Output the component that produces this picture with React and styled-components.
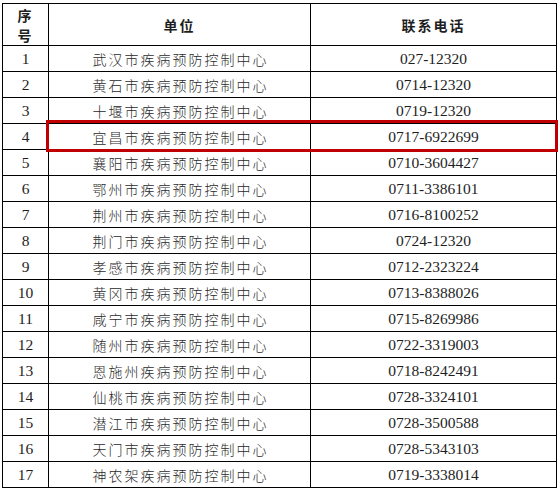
import React from "react";
import styled, { createGlobalStyle } from "styled-components";

const GlobalStyle = createGlobalStyle`
    html, body {
        margin: 0;
        padding: 0;
        background: #ffffff;
    }
`;

const rows = [
    ["武汉市疾病预防控制中心", "027-12320"],
    ["黄石市疾病预防控制中心", "0714-12320"],
    ["十堰市疾病预防控制中心", "0719-12320"],
    ["宜昌市疾病预防控制中心", "0717-6922699"],
    ["襄阳市疾病预防控制中心", "0710-3604427"],
    ["鄂州市疾病预防控制中心", "0711-3386101"],
    ["荆州市疾病预防控制中心", "0716-8100252"],
    ["荆门市疾病预防控制中心", "0724-12320"],
    ["孝感市疾病预防控制中心", "0712-2323224"],
    ["黄冈市疾病预防控制中心", "0713-8388026"],
    ["咸宁市疾病预防控制中心", "0715-8269986"],
    ["随州市疾病预防控制中心", "0722-3319003"],
    ["恩施州疾病预防控制中心", "0718-8242491"],
    ["仙桃市疾病预防控制中心", "0728-3324101"],
    ["潜江市疾病预防控制中心", "0728-3500588"],
    ["天门市疾病预防控制中心", "0728-5343103"],
    ["神农架疾病预防控制中心", "0719-3338014"],
];

const HIGHLIGHT = 3; // 宜昌
const HEAD_H = 42;
const ROW_H = 26;

const Page = styled.div`
    padding: 3px 0 0 2px;
`;

const Wrap = styled.div`
    position: relative;
    width: 554px;
`;

const Table = styled.table`
    border-collapse: collapse;
    width: 554px;
    table-layout: fixed;
    font-family: "Liberation Serif", "Noto Sans CJK SC", serif;
    color: #1e1e1e;
`;

const Th = styled.th`
    height: ${HEAD_H - 1}px;
    padding: 0;
    border: 1px solid #000;
    font-family: "Noto Sans CJK SC", sans-serif;
    font-size: 14px;
    font-weight: bold;
    line-height: 20px;
    letter-spacing: 2px;
    text-align: center;
    vertical-align: middle;
`;

const Td = styled.td`
    height: ${ROW_H - 1}px;
    padding: ${(p) => (p.$cn ? "0 0 0 2px" : "0")};
    border: 1px solid #000;
    text-align: center;
    vertical-align: middle;
    font-size: ${(p) => (p.$cn ? "14px" : "15.5px")};
    font-family: ${(p) =>
        p.$cn ? `"Noto Sans CJK SC", sans-serif` : `"Liberation Serif", serif`};
    letter-spacing: ${(p) => (p.$cn ? "2px" : "0")};
    font-weight: ${(p) => (p.$cn ? 300 : 400)};
    color: ${(p) => (p.$cn ? "#2a2a2a" : "#1e1e1e")};
    line-height: 18px;
`;

const Highlight = styled.div`
    position: absolute;
    left: 44px;
    right: -2px;
    height: 26px;
    border: 3px solid #c00000;
    pointer-events: none;
`;

const App = () => {
    return (
        <Page>
            <GlobalStyle />
            <Wrap>
                <Table>
                    <colgroup>
                        <col style={{ width: 46 }} />
                        <col style={{ width: 262 }} />
                        <col style={{ width: 246 }} />
                    </colgroup>
                    <thead>
                        <tr>
                            <Th>序<br />号</Th>
                            <Th>单位</Th>
                            <Th>联系电话</Th>
                        </tr>
                    </thead>
                    <tbody>
                        {rows.map((r, i) => (
                            <tr key={i}>
                                <Td>{i + 1}</Td>
                                <Td $cn>{r[0]}</Td>
                                <Td>{r[1]}</Td>
                            </tr>
                        ))}
                    </tbody>
                </Table>
                <Highlight style={{ top: HEAD_H + HIGHLIGHT * ROW_H - 3 }} />
            </Wrap>
        </Page>
    );
};

export default App;
